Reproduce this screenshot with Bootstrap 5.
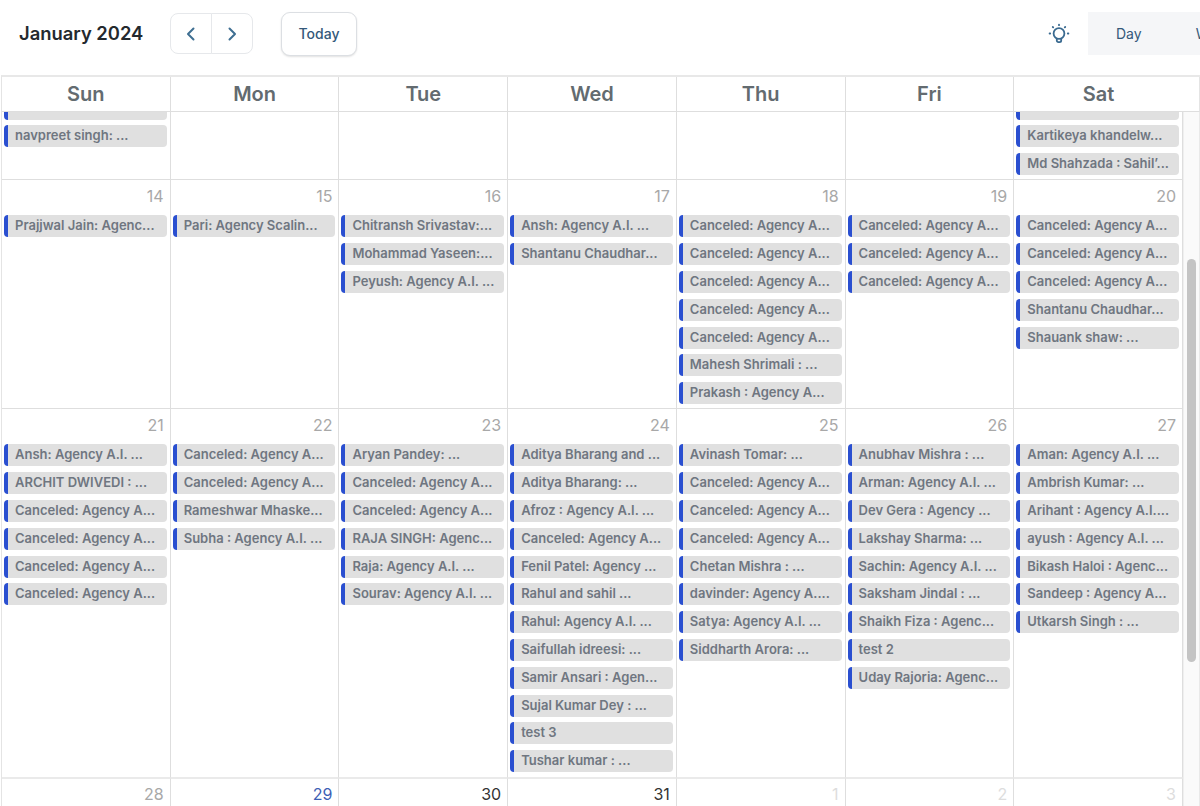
<!DOCTYPE html>
<html lang="en">
<head>
<meta charset="utf-8">
<title>January 2024</title>
<link href="https://cdn.jsdelivr.net/npm/bootstrap@5.3.0/dist/css/bootstrap.min.css" rel="stylesheet">
<style>
html, body { height: 806px; overflow: hidden; background: #fff; font-family: "Inter", "Liberation Sans", sans-serif; }
.cal-page { width: 1200px; height: 806px; overflow: hidden; }
.cal-top { height: 75px; padding-left: 19px; padding-bottom: 8px; }
.cal-title { font-size: 18.4px; font-weight: 600; color: #24292e; width: 151px; margin: 0; line-height: 1; }
.nav-pair { width: 83px; height: 41px; }
.nav-pair .btn { padding: 0; border: 1px solid #e6e8eb; background: #fff; display: flex; align-items: center; justify-content: center; border-radius: 8px; }
.today-btn { width: 76px; height: 44px; margin-left: 28px; padding: 0; border: 1px solid #dcdfe3; border-radius: 9px; background: #fff; color: #34597a; font-size: 14px; font-weight: 500; box-shadow: 0 1px 2px rgba(0,0,0,.12); }
.bulb-wrap { margin-left: auto; margin-right: 18px; line-height: 0; }
.view-tabs { flex: 0 0 112px; width: 112px; height: 43px; overflow: hidden; background: #f5f6f8; white-space: nowrap; }
.view-tabs span { display: inline-block; line-height: 43px; color: #34597a; font-size: 14px; font-weight: 400; padding-left: 28px; }
.view-tabs span + span { padding-left: 54px; }
.cal-shell { margin-left: 1px; border-left: 1px solid #e4e4e4; border-top: 2px solid #e8e8e8; height: 731px; }
.head-row { height: 35px; padding-right: 16px; border-bottom: 1px solid #dedede; border-right: 1px solid #e4e4e4; }
.day-grid { display: grid; grid-template-columns: repeat(7, 1fr); }
.head-row > div { text-align: center; font-size: 20px; font-weight: 600; color: #636b70; line-height: 34px; border-right: 1px solid #dedede; }
.head-row > div:last-child { border-right: 0; }
.body-row { height: 694px; overflow: hidden; }
.weeks { flex: 1 1 auto; min-width: 0; grid-template-rows: 68px 229px 369px 1fr; }
.day-cell { border-right: 1px solid #dedede; border-bottom: 1px solid #dedede; padding: 0 3px 0 2px; overflow: hidden; min-width: 0; display: flex; flex-direction: column; }
.clip-week { justify-content: flex-end; }
.clip-week .evt:last-child { margin-bottom: 3.82px; }
.day-cell:nth-child(n+15):nth-child(-n+21) { border-bottom-color: #eaeaea; }
.last-week { border-top: 1px solid #eaeaea; border-bottom: 0; }
.num { text-align: right; font-size: 16px; line-height: 20px; height: 35.3px; padding: 6px 3px 0 0; flex: none; color: #a8a8a8; }
.last-week .num { padding-top: 5px; }
.num-today { color: #3d5fb5; }
.num-cur { color: #333; }
.num-next { color: #ddd; }
.evt { flex: none; height: 22px; margin: 0 0 5.82px 0; background: #e0e0e0; border-left: 4px solid #2a4fd0; border-radius: 4px; padding-left: 7px; font-size: 13px; font-weight: 600; line-height: 21px; color: #6f7680; white-space: nowrap; overflow: hidden; text-overflow: ellipsis; }
.row-gap { flex: none; height: 25.82px; }
.scroll-track { flex: 0 0 17px; width: 17px; padding: 147px 3px 0 3px; background: #fafafa; border-left: 1px solid #efefef; border-right: 1px solid #e9e9e9; }
.scroll-thumb { height: 403px; background: #c4c4c4; border-radius: 5px; }
</style>
</head>
<body>
<div class="cal-page">
  <div class="cal-top d-flex align-items-center">
    <h1 class="cal-title">January 2024</h1>
    <div class="btn-group nav-pair" role="group">
      <button class="btn" type="button" aria-label="Previous"><svg width="12" height="16" viewBox="0 0 12 16" fill="none" stroke="#3f6f92" stroke-width="2" stroke-linecap="round" stroke-linejoin="round"><path d="M8.5 2.5 3 8l5.5 5.5"/></svg></button>
      <button class="btn" type="button" aria-label="Next"><svg width="12" height="16" viewBox="0 0 12 16" fill="none" stroke="#3f6f92" stroke-width="2" stroke-linecap="round" stroke-linejoin="round"><path d="M3.5 2.5 9 8l-5.5 5.5"/></svg></button>
    </div>
    <button class="btn today-btn" type="button">Today</button>
    <div class="bulb-wrap">
      <svg width="22" height="22" viewBox="0 0 22 22" fill="none" stroke="#3a6a90" stroke-width="1.8" stroke-linecap="round"><circle cx="11" cy="10.5" r="5.4"/><path d="M8.8 15.6v2a1.6 1.6 0 0 0 1.6 1.6h1.2a1.6 1.6 0 0 0 1.6-1.6v-2"/><path d="M11 1.6v.6M4.8 4l.4.4M17.2 4l-.4.4M1.6 10.5h.6M19.8 10.5h.6"/></svg>
    </div>
    <div class="view-tabs"><span>Day</span><span>Week</span></div>
  </div>
  <div class="cal-shell">
    <div class="head-row day-grid">
      <div>Sun</div><div>Mon</div><div>Tue</div><div>Wed</div><div>Thu</div><div>Fri</div><div>Sat</div>
    </div>
    <div class="body-row d-flex">
      <div class="weeks day-grid">
        <div class="day-cell clip-week"><div class="evt"></div><div class="evt">navpreet singh: ...</div><div class="row-gap"></div></div>
        <div class="day-cell clip-week"></div>
        <div class="day-cell clip-week"></div>
        <div class="day-cell clip-week"></div>
        <div class="day-cell clip-week"></div>
        <div class="day-cell clip-week"></div>
        <div class="day-cell clip-week"><div class="evt"></div><div class="evt">Kartikeya khandelw...</div><div class="evt">Md Shahzada : Sahil’...</div></div>

        <div class="day-cell"><div class="num">14</div><div class="evt">Prajjwal Jain: Agenc...</div></div>
        <div class="day-cell"><div class="num">15</div><div class="evt">Pari: Agency Scalin...</div></div>
        <div class="day-cell"><div class="num">16</div><div class="evt">Chitransh Srivastav:...</div><div class="evt">Mohammad Yaseen:...</div><div class="evt">Peyush: Agency A.I. ...</div></div>
        <div class="day-cell"><div class="num">17</div><div class="evt">Ansh: Agency A.I. ...</div><div class="evt">Shantanu Chaudhar...</div></div>
        <div class="day-cell"><div class="num">18</div><div class="evt">Canceled: Agency A...</div><div class="evt">Canceled: Agency A...</div><div class="evt">Canceled: Agency A...</div><div class="evt">Canceled: Agency A...</div><div class="evt">Canceled: Agency A...</div><div class="evt">Mahesh Shrimali : ...</div><div class="evt">Prakash : Agency A...</div></div>
        <div class="day-cell"><div class="num">19</div><div class="evt">Canceled: Agency A...</div><div class="evt">Canceled: Agency A...</div><div class="evt">Canceled: Agency A...</div></div>
        <div class="day-cell"><div class="num">20</div><div class="evt">Canceled: Agency A...</div><div class="evt">Canceled: Agency A...</div><div class="evt">Canceled: Agency A...</div><div class="evt">Shantanu Chaudhar...</div><div class="evt">Shauank shaw: ...</div></div>

        <div class="day-cell"><div class="num">21</div><div class="evt">Ansh: Agency A.I. ...</div><div class="evt">ARCHIT DWIVEDI : ...</div><div class="evt">Canceled: Agency A...</div><div class="evt">Canceled: Agency A...</div><div class="evt">Canceled: Agency A...</div><div class="evt">Canceled: Agency A...</div></div>
        <div class="day-cell"><div class="num">22</div><div class="evt">Canceled: Agency A...</div><div class="evt">Canceled: Agency A...</div><div class="evt">Rameshwar Mhaske...</div><div class="evt">Subha : Agency A.I. ...</div></div>
        <div class="day-cell"><div class="num">23</div><div class="evt">Aryan Pandey: ...</div><div class="evt">Canceled: Agency A...</div><div class="evt">Canceled: Agency A...</div><div class="evt">RAJA SINGH: Agenc...</div><div class="evt">Raja: Agency A.I. ...</div><div class="evt">Sourav: Agency A.I. ...</div></div>
        <div class="day-cell"><div class="num">24</div><div class="evt">Aditya Bharang and ...</div><div class="evt">Aditya Bharang: ...</div><div class="evt">Afroz : Agency A.I. ...</div><div class="evt">Canceled: Agency A...</div><div class="evt">Fenil Patel: Agency ...</div><div class="evt">Rahul and sahil ...</div><div class="evt">Rahul: Agency A.I. ...</div><div class="evt">Saifullah idreesi: ...</div><div class="evt">Samir Ansari : Agen...</div><div class="evt">Sujal Kumar Dey : ...</div><div class="evt">test 3</div><div class="evt">Tushar kumar : ...</div></div>
        <div class="day-cell"><div class="num">25</div><div class="evt">Avinash Tomar: ...</div><div class="evt">Canceled: Agency A...</div><div class="evt">Canceled: Agency A...</div><div class="evt">Canceled: Agency A...</div><div class="evt">Chetan Mishra : ...</div><div class="evt">davinder: Agency A....</div><div class="evt">Satya: Agency A.I. ...</div><div class="evt">Siddharth Arora: ...</div></div>
        <div class="day-cell"><div class="num">26</div><div class="evt">Anubhav Mishra : ...</div><div class="evt">Arman: Agency A.I. ...</div><div class="evt">Dev Gera : Agency ...</div><div class="evt">Lakshay Sharma: ...</div><div class="evt">Sachin: Agency A.I. ...</div><div class="evt">Saksham Jindal : ...</div><div class="evt">Shaikh Fiza : Agenc...</div><div class="evt">test 2</div><div class="evt">Uday Rajoria: Agenc...</div></div>
        <div class="day-cell"><div class="num">27</div><div class="evt">Aman: Agency A.I. ...</div><div class="evt">Ambrish Kumar: ...</div><div class="evt">Arihant : Agency A.I....</div><div class="evt">ayush : Agency A.I. ...</div><div class="evt">Bikash Haloi : Agenc...</div><div class="evt">Sandeep : Agency A...</div><div class="evt">Utkarsh Singh : ...</div></div>

        <div class="day-cell last-week"><div class="num">28</div></div>
        <div class="day-cell last-week"><div class="num num-today">29</div></div>
        <div class="day-cell last-week"><div class="num num-cur">30</div></div>
        <div class="day-cell last-week"><div class="num num-cur">31</div></div>
        <div class="day-cell last-week"><div class="num num-next">1</div></div>
        <div class="day-cell last-week"><div class="num num-next">2</div></div>
        <div class="day-cell last-week"><div class="num num-next">3</div></div>
      </div>
      <div class="scroll-track"><div class="scroll-thumb"></div></div>
    </div>
  </div>
</div>
<script src="https://cdn.jsdelivr.net/npm/bootstrap@5.3.0/dist/js/bootstrap.bundle.min.js"></script>
</body>
</html>
